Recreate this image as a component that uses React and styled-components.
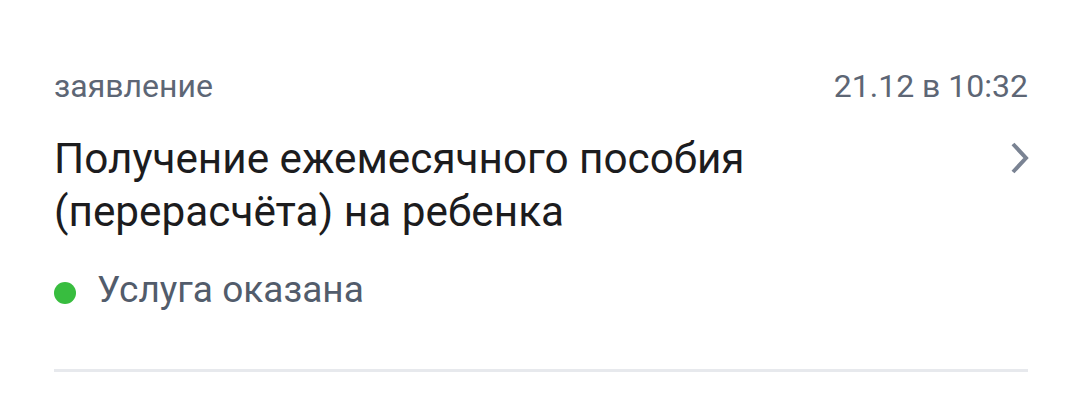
import React from 'react';
import styled, { createGlobalStyle } from 'styled-components';

const GlobalStyle = createGlobalStyle`
    html, body {
        margin: 0;
        padding: 0;
        background: #ffffff;
        font-family: Roboto, "Noto Sans", sans-serif;
    }
`;

const Card = styled.div`
    width: 1080px;
    height: 412px;
    box-sizing: border-box;
    padding: 66px 52px 0 54px;
    background: #fff;
`;

const MetaRow = styled.div`
    display: flex;
    justify-content: space-between;
    align-items: baseline;
    font-size: 32px;
    line-height: 40px;
    color: #5d6675;
`;

const TitleRow = styled.div`
    display: flex;
    justify-content: space-between;
    align-items: flex-start;
    margin-top: 26px;
`;

const Title = styled.div`
    font-size: 42.3px;
    line-height: 53px;
    color: #1c1c1e;
    max-width: 780px;
`;

const Chevron = styled.svg`
    flex-shrink: 0;
    margin-top: 9px;
    margin-right: -2px;
`;

const Status = styled.div`
    display: flex;
    align-items: center;
    gap: 21px;
    margin-top: 32px;
    font-size: 37px;
    line-height: 40px;
    color: #525c6b;
`;

const Dot = styled.span`
    width: 22px;
    height: 22px;
    margin-top: 6px;
    border-radius: 50%;
    background: ${p => p.color};
    flex-shrink: 0;
`;

const Divider = styled.div`
    height: 3px;
    background: #e7e9ed;
    margin-top: 59px;
`;

export default function App() {
    return (
        <>
            <GlobalStyle />
            <Card>
                <MetaRow>
                    <span>заявление</span>
                    <span>21.12 в 10:32</span>
                </MetaRow>
                <TitleRow>
                    <Title>Получение ежемесячного пособия (перерасчёта) на ребенка</Title>
                    <Chevron width="22" height="34" viewBox="0 0 22 34">
                        <path d="M5 3 L18 17 L5 31" fill="none" stroke="#7a8393" strokeWidth="4" strokeLinecap="butt" strokeLinejoin="miter" />
                    </Chevron>
                </TitleRow>
                <Status>
                    <Dot color="#38bd3f" />
                    <span>Услуга оказана</span>
                </Status>
                <Divider />
            </Card>
        </>
    );
}
